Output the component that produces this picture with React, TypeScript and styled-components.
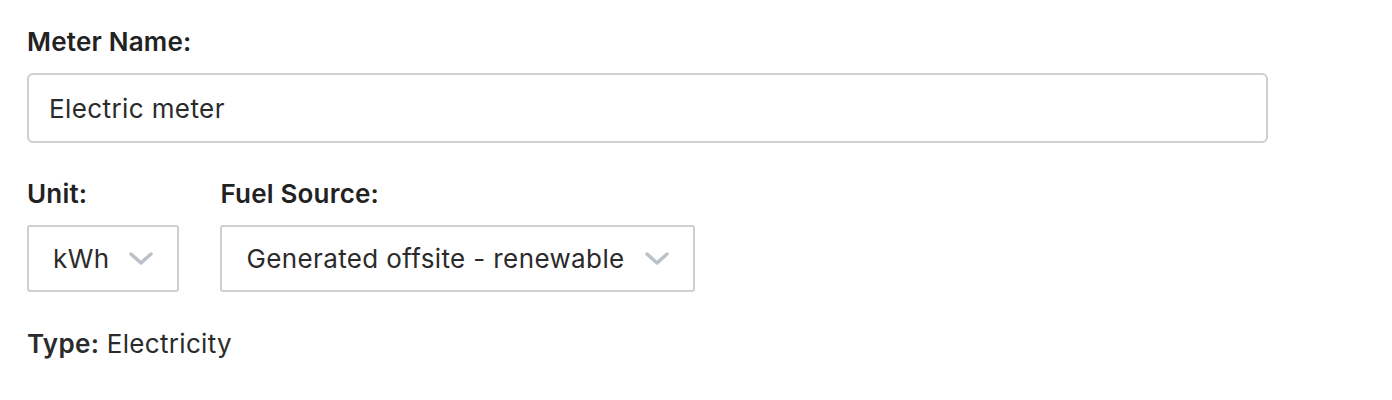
import * as React from 'react';
import styled, { createGlobalStyle } from 'styled-components';

const GlobalStyle = createGlobalStyle`
    body {
        margin: 0;
        background: #ffffff;
        font-family: Inter, "Open Sans", sans-serif;
        color: #2b2b2b;
    }
`;

const Chevron = () => (
    <svg width="24" height="13" viewBox="0 0 24 13" fill="none">
        <path d="M2 2 L12 11 L22 2" stroke="#bac1c9" strokeWidth="3.5" strokeLinecap="round" strokeLinejoin="round" />
    </svg>
);

const MeterForm = () => {
    return (
        <StyledWrapper>
            <StyledField>
                <StyledLabel>Meter Name:</StyledLabel>
                <StyledInput defaultValue="Electric meter" />
            </StyledField>
            <StyledRow>
                <StyledField>
                    <StyledLabel>Unit:</StyledLabel>
                    <StyledSelect>
                        <span>kWh</span>
                        <Chevron />
                    </StyledSelect>
                </StyledField>
                <StyledField>
                    <StyledLabel>Fuel Source:</StyledLabel>
                    <StyledSelect>
                        <span>Generated offsite - renewable</span>
                        <Chevron />
                    </StyledSelect>
                </StyledField>
            </StyledRow>
            <StyledType>
                <strong>Type:</strong> Electricity
            </StyledType>
        </StyledWrapper>
    );
};

export default function App() {
    return (
        <>
            <GlobalStyle />
            <MeterForm />
        </>
    );
}

const StyledWrapper = styled.div`
    display: flex;
    flex-direction: column;
    padding: 25px 0 0 27px;
    width: 1241px;
`;
const StyledField = styled.div`
    display: flex;
    flex-direction: column;
    align-items: flex-start;
`;
const StyledRow = styled.div`
    display: flex;
    gap: 41px;
    margin-top: 34px;
`;
const StyledLabel = styled.label`
    font-size: 26px;
    font-weight: 600;
    letter-spacing: 0.2px;
    line-height: 34px;
    color: #222;
    margin-bottom: 14px;
`;
const StyledInput = styled.input`
    box-sizing: border-box;
    width: 100%;
    height: 70px;
    border: 2px solid #cfcfcf;
    border-radius: 6px;
    padding: 0 20px;
    font-family: inherit;
    font-size: 26px;
    letter-spacing: 0.4px;
    color: #2b2b2b;
    outline: none;
`;
const StyledSelect = styled.div`
    box-sizing: border-box;
    display: flex;
    align-items: center;
    gap: 20px;
    height: 67px;
    padding: 0 24px;
    border: 2px solid #cfcfcf;
    border-radius: 3px;
    font-size: 26px;
    letter-spacing: 0.38px;
    color: #2b2b2b;
`;
const StyledType = styled.div`
    margin-top: 35px;
    font-size: 26px;
    letter-spacing: 0.3px;
    line-height: 34px;

    strong {
        font-weight: 600;
    }
`;
